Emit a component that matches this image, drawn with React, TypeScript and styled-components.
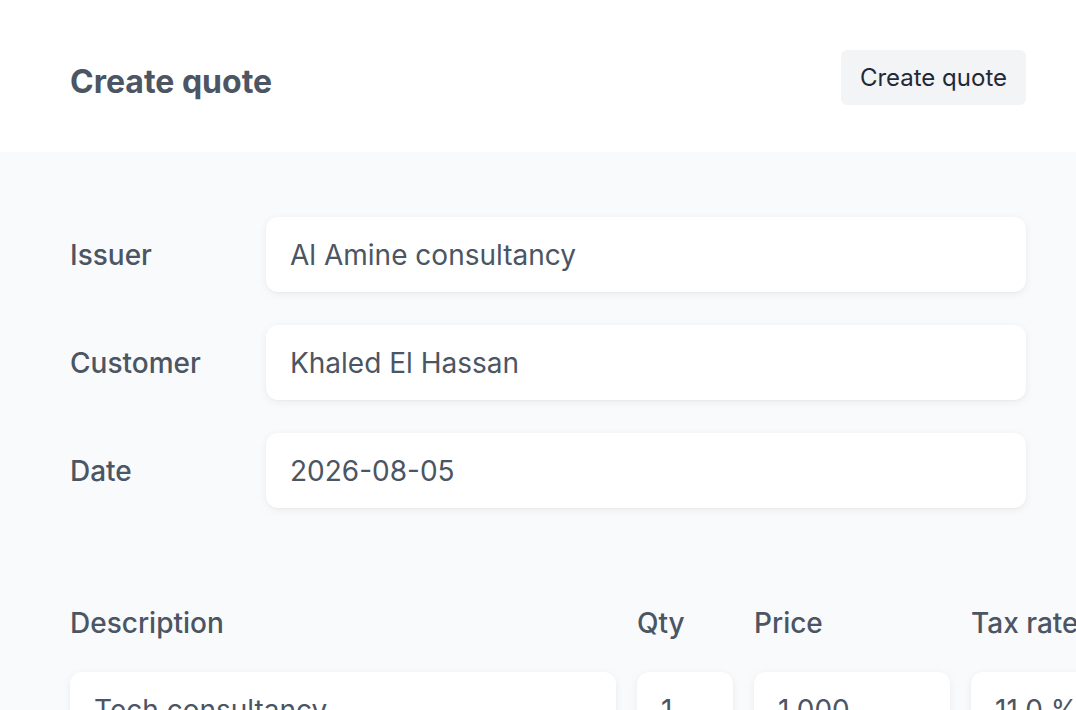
import React from "react";
import styled, { createGlobalStyle } from "styled-components";

const GlobalStyle = createGlobalStyle`
  html, body { margin: 0; padding: 0; background: #ffffff; }
  body { font-family: Inter, "Noto Sans", "Liberation Sans", sans-serif; overflow: hidden; }
  * { box-sizing: border-box; }
`;

const Page = styled.div`
  width: 1076px;
  height: 710px;
  overflow: hidden;
  display: flex;
  flex-direction: column;
  background: #f9fafb;
`;

const Header = styled.header`
  height: 152px;
  flex: none;
  background: #ffffff;
  display: flex;
  justify-content: space-between;
  align-items: flex-start;
  padding: 50px 50px 0 70px;
`;

const Title = styled.h1`
  margin: 14px 0 0;
  font-size: 32px;
  line-height: 36px;
  font-weight: 700;
  color: #4b5563;
`;

const Button = styled.button`
  height: 55px;
  padding: 0 19px;
  border: none;
  border-radius: 6px;
  background: #f3f4f6;
  color: #1f2937;
  font-family: inherit;
  font-size: 24px;
  font-weight: 400;
`;

const Body = styled.main`
  flex: 1;
  padding: 65px 50px 0 70px;
  display: flex;
  flex-direction: column;
`;

const Form = styled.div`
  display: flex;
  flex-direction: column;
  gap: 33px;
`;

const Row = styled.div`
  display: grid;
  grid-template-columns: 196px 1fr;
  align-items: center;
`;

const Label = styled.label`
  font-size: 28px;
  font-weight: 500;
  color: #4b5563;
`;

const Field = styled.div`
  height: 75px;
  display: flex;
  align-items: center;
  padding: 0 24px;
  background: #ffffff;
  border-radius: 12px;
  box-shadow: 0 2px 10px rgba(17, 24, 39, 0.06), 0 1px 2px rgba(17, 24, 39, 0.03);
  font-size: 28px;
  color: #4b5563;
  white-space: nowrap;
  overflow: hidden;
`;

const Table = styled.div`
  margin-top: 98px;
  display: grid;
  grid-template-columns: 546px 96px 196px 196px;
  column-gap: 21px;
  row-gap: 32px;
  width: max-content;
`;

const HeadCell = styled.div`
  font-size: 28px;
  line-height: 34px;
  font-weight: 500;
  color: #4b5563;
  white-space: nowrap;
`;

export default function App() {
  return (
    <>
      <GlobalStyle />
      <Page>
        <Header>
          <Title>Create quote</Title>
          <Button>Create quote</Button>
        </Header>
        <Body>
          <Form>
            <Row>
              <Label>Issuer</Label>
              <Field>Al Amine consultancy</Field>
            </Row>
            <Row>
              <Label>Customer</Label>
              <Field>Khaled El Hassan</Field>
            </Row>
            <Row>
              <Label>Date</Label>
              <Field>2026-08-05</Field>
            </Row>
          </Form>
          <Table>
            <HeadCell>Description</HeadCell>
            <HeadCell>Qty</HeadCell>
            <HeadCell>Price</HeadCell>
            <HeadCell>Tax rate</HeadCell>
            <Field>Tech consultancy</Field>
            <Field>1</Field>
            <Field>1,000</Field>
            <Field>11.0 %</Field>
          </Table>
        </Body>
      </Page>
    </>
  );
}
